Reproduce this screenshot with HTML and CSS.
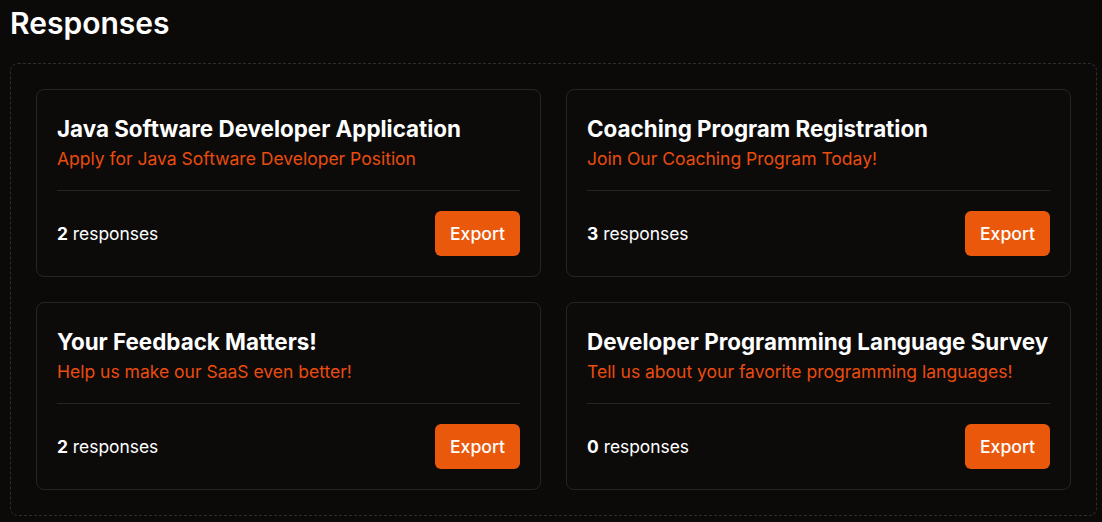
FILE: index.html
```html
<!DOCTYPE html>
<html lang="en">
<head>
<meta charset="utf-8">
<title>Responses</title>
<link rel="stylesheet" href="styles.css">
</head>
<body>
  <main class="page">
    <h1 class="page-title">Responses</h1>
    <section class="board">
      <article class="card">
        <h2 class="card-title">Java Software Developer Application</h2>
        <p class="card-sub">Apply for Java Software Developer Position</p>
        <div class="card-foot">
          <span class="count"><b>2</b> responses</span>
          <button class="export">Export</button>
        </div>
      </article>
      <article class="card">
        <h2 class="card-title">Coaching Program Registration</h2>
        <p class="card-sub">Join Our Coaching Program Today!</p>
        <div class="card-foot">
          <span class="count"><b>3</b> responses</span>
          <button class="export">Export</button>
        </div>
      </article>
      <article class="card">
        <h2 class="card-title">Your Feedback Matters!</h2>
        <p class="card-sub">Help us make our SaaS even better!</p>
        <div class="card-foot">
          <span class="count"><b>2</b> responses</span>
          <button class="export">Export</button>
        </div>
      </article>
      <article class="card">
        <h2 class="card-title">Developer Programming Language Survey</h2>
        <p class="card-sub">Tell us about your favorite programming languages!</p>
        <div class="card-foot">
          <span class="count"><b>0</b> responses</span>
          <button class="export">Export</button>
        </div>
      </article>
    </section>
  </main>
</body>
</html>
```

FILE: styles.css
```css
* { box-sizing: border-box; }
html, body {
  margin: 0;
  background: #0b0a09;
  color: #ffffff;
  font-family: Inter, "Noto Sans", sans-serif;
}
.page {
  padding: 5px 5px 0 10px;
}
.page-title {
  margin: 0 0 22px 0;
  font-size: 30px;
  line-height: 36px;
  font-weight: 600;
  color: #ffffff;
}
.board {
  border: 1px dashed #2f2e2c;
  border-radius: 8px;
  padding: 25px;
  display: grid;
  grid-template-columns: 1fr 1fr;
  gap: 25px;
  width: 1087px;
}
.card {
  border: 1px solid #262524;
  border-radius: 8px;
  background: #0c0b0a;
  padding: 25px 20px 20px 20px;
  display: flex;
  flex-direction: column;
  min-width: 0;
}
.card-title {
  margin: 0;
  font-size: 22.4px;
  line-height: 28px;
  font-weight: 700;
  color: #ffffff;
  white-space: nowrap;
}
.card-sub {
  margin: 4px 0 0 0;
  font-size: 17.5px;
  line-height: 24px;
  color: #ea4c0e;
  padding-bottom: 19px;
  border-bottom: 1px solid #262524;
}
.card-foot {
  margin-top: 20px;
  display: flex;
  align-items: center;
  justify-content: space-between;
}
.count {
  font-size: 17.4px;
  color: #ffffff;
}
.count b { font-weight: 700; }
.export {
  background: #ea580c;
  color: #ffffff;
  border: none;
  border-radius: 6px;
  width: 85px;
  height: 45px;
  font-family: Inter, "Noto Sans", sans-serif;
  font-size: 17.6px;
  font-weight: 500;
  cursor: pointer;
}
```
